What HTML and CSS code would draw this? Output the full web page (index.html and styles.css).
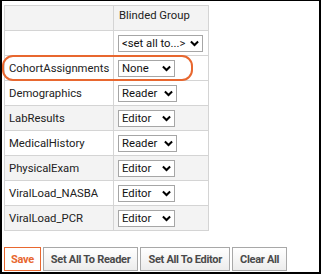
FILE: index.html
```html
<!DOCTYPE html>
<html>
<head>
<meta charset="utf-8">
<link rel="stylesheet" href="styles.css">
</head>
<body>
<div class="frame">
  <table class="perm">
    <tr class="head">
      <td class="name"></td>
      <td class="grp">Blinded Group</td>
    </tr>
    <tr>
      <td class="name"></td>
      <td class="grp"><span class="sel w-all"><select><option>&lt;set all to...&gt;</option></select><svg class="chev" viewBox="0 0 10 7"><path d="M1 1.2 L5 5.2 L9 1.2" /></svg></span></td>
    </tr>
    <tr class="hl">
      <td class="name">CohortAssignments</td>
      <td class="grp"><span class="sel w-none"><select><option>None</option></select><svg class="chev" viewBox="0 0 10 7"><path d="M1 1.2 L5 5.2 L9 1.2" /></svg></span></td>
    </tr>
    <tr>
      <td class="name">Demographics</td>
      <td class="grp"><span class="sel w-reader"><select><option>Reader</option></select><svg class="chev" viewBox="0 0 10 7"><path d="M1 1.2 L5 5.2 L9 1.2" /></svg></span></td>
    </tr>
    <tr class="alt">
      <td class="name">LabResults</td>
      <td class="grp"><span class="sel w-editor"><select><option>Editor</option></select><svg class="chev" viewBox="0 0 10 7"><path d="M1 1.2 L5 5.2 L9 1.2" /></svg></span></td>
    </tr>
    <tr>
      <td class="name">MedicalHistory</td>
      <td class="grp"><span class="sel w-reader"><select><option>Reader</option></select><svg class="chev" viewBox="0 0 10 7"><path d="M1 1.2 L5 5.2 L9 1.2" /></svg></span></td>
    </tr>
    <tr class="alt">
      <td class="name">PhysicalExam</td>
      <td class="grp"><span class="sel w-editor"><select><option>Editor</option></select><svg class="chev" viewBox="0 0 10 7"><path d="M1 1.2 L5 5.2 L9 1.2" /></svg></span></td>
    </tr>
    <tr>
      <td class="name">ViralLoad_NASBA</td>
      <td class="grp"><span class="sel w-editor"><select><option>Editor</option></select><svg class="chev" viewBox="0 0 10 7"><path d="M1 1.2 L5 5.2 L9 1.2" /></svg></span></td>
    </tr>
    <tr class="alt">
      <td class="name">ViralLoad_PCR</td>
      <td class="grp"><span class="sel w-editor"><select><option>Editor</option></select><svg class="chev" viewBox="0 0 10 7"><path d="M1 1.2 L5 5.2 L9 1.2" /></svg></span></td>
    </tr>
  </table>
  <div class="buttons">
    <button class="btn save">Save</button>
    <button class="btn">Set All To Reader</button>
    <button class="btn">Set All To Editor</button>
    <button class="btn">Clear All</button>
  </div>
</div>
</body>
</html>
```

FILE: styles.css
```css
html, body {
  margin: 0;
  padding: 0;
  background: #fff;
}
.frame {
  box-sizing: border-box;
  width: 321px;
  height: 274px;
  border-style: solid;
  border-color: #000;
  border-width: 1px 2px 2px 2px;
  padding: 4px 0 0 2px;
  font-family: Roboto, "Liberation Sans", sans-serif;
  color: #222;
}
.perm {
  border-collapse: separate;
  border-spacing: 0;
  border-top: 1px solid #d4d4d4;
  border-left: 1px solid #d4d4d4;
  table-layout: fixed;
  width: 205px;
}
.perm td {
  box-sizing: border-box;
  border-right: 1px solid #d4d4d4;
  border-bottom: 1px solid #d4d4d4;
  height: 25px;
  padding: 0;
  font-size: 11.3px;
  vertical-align: middle;
  white-space: nowrap;
  overflow: visible;
}
.perm td.name {
  width: 109px;
  padding-left: 4px;
}
.perm td.grp {
  width: 95px;
  padding-left: 4px;
}
.perm tr.head td {
  background: #f3f3f3;
  vertical-align: top;
  padding-top: 3px;
}
.perm tr.head td.grp {
  padding-left: 5px;
}
.perm tr.alt td {
  background: #f3f3f3;
}
.perm tr.hl td.name {
  position: relative;
}
.perm tr.hl td.name::before {
  content: "";
  position: absolute;
  left: -3px;
  top: -1px;
  width: 187px;
  height: 22px;
  border: 2px solid #e8672f;
  border-radius: 11px;
  pointer-events: none;
}
.sel {
  position: relative;
  display: inline-block;
  vertical-align: middle;
}
.sel select {
  appearance: none;
  -webkit-appearance: none;
  display: block;
  box-sizing: border-box;
  height: 17px;
  margin: 0;
  padding: 0 0 0 3px;
  border: 1px solid #a6a6a6;
  border-radius: 0;
  background: #fff;
  color: #111;
  font-family: Roboto, "Liberation Sans", sans-serif;
  font-size: 11.3px;
  line-height: 15px;
}
.w-all select { width: 85px; }
.w-none select { width: 57px; }
.w-reader select { width: 59px; }
.w-editor select { width: 57px; }
.chev {
  position: absolute;
  right: 4px;
  top: 5px;
  width: 9px;
  height: 7px;
  fill: none;
  stroke: #000;
  stroke-width: 2.2;
}
.buttons {
  display: flex;
  gap: 2px;
  margin-top: 16px;
}
.btn {
  box-sizing: border-box;
  height: 24px;
  margin: 0;
  padding: 0 7px;
  border: 1px solid #a8a8a8;
  border-radius: 0;
  background: linear-gradient(#ffffff, #ececec);
  color: #4a4a4a;
  font-family: Roboto, "Liberation Sans", sans-serif;
  font-weight: bold;
  font-size: 11px;
  letter-spacing: -0.3px;
}
.btn.save {
  padding: 0 6px;
  border-color: #e8672f;
  background: #fff;
  color: #e8672f;
}
```
